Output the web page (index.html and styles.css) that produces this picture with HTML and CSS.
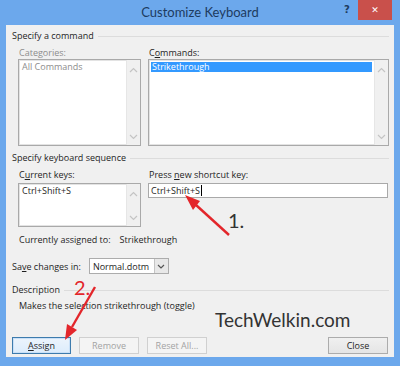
FILE: index.html
```html
<!DOCTYPE html>
<html lang="en">
<head>
    <meta charset="UTF-8">
    <meta name="viewport" content="width=device-width, initial-scale=1.0">
    <title>Customize Keyboard</title>
    <link rel="stylesheet" href="styles.css">
</head>
<body>
    <div class="window">
        <div class="titlebar">
            <span class="title">Customize Keyboard</span>
            <span class="help">?</span>
            <span class="close">&#x2715;</span>
        </div>

        <div class="client">
            <div class="group-head"><span>Specify a command</span></div>
            <div class="pair">
                <div class="col">
                    <div class="label disabled">Categories:</div>
                    <div class="listbox tall">
                        <div class="items">
                            <div class="item disabled">All Commands</div>
                        </div>
                        <div class="scroll">
                            <svg width="9" height="6" viewBox="0 0 9 6"><path d="M1 5 L4.5 1.5 L8 5" fill="none" stroke="#c4c4c4" stroke-width="1.2"/></svg>
                            <svg width="9" height="6" viewBox="0 0 9 6"><path d="M1 1 L4.5 4.5 L8 1" fill="none" stroke="#c4c4c4" stroke-width="1.2"/></svg>
                        </div>
                    </div>
                </div>
                <div class="col">
                    <div class="label">C<u>o</u>mmands:</div>
                    <div class="listbox tall">
                        <div class="items">
                            <div class="item selected">Strikethrough</div>
                        </div>
                        <div class="scroll">
                            <svg width="9" height="6" viewBox="0 0 9 6"><path d="M1 5 L4.5 1.5 L8 5" fill="none" stroke="#c4c4c4" stroke-width="1.2"/></svg>
                            <svg width="9" height="6" viewBox="0 0 9 6"><path d="M1 1 L4.5 4.5 L8 1" fill="none" stroke="#c4c4c4" stroke-width="1.2"/></svg>
                        </div>
                    </div>
                </div>
            </div>

            <div class="group-head second"><span>Specify keyboard sequence</span></div>
            <div class="pair">
                <div class="col">
                    <div class="label">C<u>u</u>rrent keys:</div>
                    <div class="listbox short">
                        <div class="items">
                            <div class="item">Ctrl+Shift+S</div>
                        </div>
                        <div class="scroll">
                            <svg width="9" height="6" viewBox="0 0 9 6"><path d="M1 5 L4.5 1.5 L8 5" fill="none" stroke="#c4c4c4" stroke-width="1.2"/></svg>
                            <svg width="9" height="6" viewBox="0 0 9 6"><path d="M1 1 L4.5 4.5 L8 1" fill="none" stroke="#c4c4c4" stroke-width="1.2"/></svg>
                        </div>
                    </div>
                </div>
                <div class="col">
                    <div class="label">Press <u>n</u>ew shortcut key:</div>
                    <div class="textbox">Ctrl+Shift+S<span class="caret"></span></div>
                </div>
            </div>

            <div class="assigned">Currently assigned to:<span class="assigned-value">Strikethrough</span></div>

            <div class="save-row">
                <span>Sa<u>v</u>e changes in:</span>
                <div class="dropdown">
                    <span class="dropdown-value">Normal.dotm</span>
                    <span class="dropdown-btn">
                        <svg width="8" height="5" viewBox="0 0 8 5"><path d="M1 1 L4 4 L7 1" fill="none" stroke="#555" stroke-width="1.2"/></svg>
                    </span>
                </div>
            </div>

            <div class="group-head third"><span>Description</span></div>
            <div class="desc">Makes the selection strikethrough (toggle)</div>

            <div class="buttons">
                <button class="btn default"><u>A</u>ssign</button>
                <button class="btn" disabled>Remove</button>
                <button class="btn" disabled>Reset All...</button>
                <span class="spacer"></span>
                <button class="btn">Close</button>
            </div>
        </div>

        <!-- annotations drawn over the screenshot -->
        <div class="watermark">TechWelkin.com</div>
        <div class="step step-1">1.</div>
        <div class="step step-2">2.</div>
        <svg class="arrows" width="400" height="366" viewBox="0 0 400 366">
            <line x1="229" y1="235" x2="196" y2="205" stroke="#e3262b" stroke-width="2.4"/>
            <polygon points="185,195 200,201 193,210" fill="#e3262b"/>
            <line x1="95" y1="287" x2="72" y2="327" stroke="#e3262b" stroke-width="2.4"/>
            <polygon points="65,340 67,324 77,330" fill="#e3262b"/>
        </svg>
    </div>
</body>
</html>
```

FILE: styles.css
```css
body {
    margin: 0;
    font-family: "Open Sans", "Noto Sans", sans-serif;
    font-size: 9px;
    color: #1e1e1e;
}
.window {
    position: relative;
    width: 400px;
    height: 366px;
    box-sizing: border-box;
    padding: 0 6px 9px 6px;
    background: #6ca8ec;
    display: flex;
    flex-direction: column;
}
.titlebar {
    position: relative;
    height: 25px;
    display: flex;
    align-items: center;
    justify-content: center;
}
.title {
    font-family: Lato, sans-serif;
    font-size: 13px;
    color: #1d3b5f;
    margin-top: -1px;
}
.help {
    position: absolute;
    left: 338px;
    top: 4px;
    font-family: "DejaVu Sans", sans-serif;
    font-weight: bold;
    font-size: 10px;
    color: #1d3b5f;
}
.close {
    position: absolute;
    left: 352px;
    top: 0;
    width: 34px;
    height: 20px;
    background: #c9504b;
    color: #fff;
    font-family: "DejaVu Sans", sans-serif;
    font-size: 9px;
    font-weight: bold;
    display: flex;
    align-items: center;
    justify-content: center;
}
.client {
    flex: 1;
    background: #f0f0f0;
    padding: 4px 5px 0 6px;
    display: flex;
    flex-direction: column;
}
.group-head {
    display: flex;
    align-items: center;
    line-height: 14px;
    height: 14px;
}
.group-head::after {
    content: "";
    flex: 1;
    height: 1px;
    background: #dcdcdc;
    margin-left: 4px;
}
.group-head.second {
    margin-top: 5px;
}
.group-head.third {
    margin-top: 9px;
}
.pair {
    display: flex;
    gap: 7px;
    padding-left: 6px;
    margin-top: 3px;
}
.col {
    display: flex;
    flex-direction: column;
}
.col:first-child {
    width: 123px;
}
.col:last-child {
    flex: 1;
}
.label {
    line-height: 13px;
    height: 13px;
    padding-left: 1px;
}
.pair + .group-head + .pair .label {
    margin-bottom: 2px;
}
.disabled {
    color: #8d8d8d;
}
.listbox {
    background: #fff;
    border: 1px solid #a9a9a9;
    box-shadow: inset 0 0 0 1px #e3e3e3;
    display: flex;
}
.listbox.tall {
    height: 87px;
    box-sizing: border-box;
}
.listbox.short {
    height: 44px;
    box-sizing: border-box;
}
.items {
    flex: 1;
    padding: 2px 2px 0 2px;
}
.item {
    line-height: 10px;
    height: 10px;
    padding: 0 1px;
}
.item.selected {
    background: #3399ff;
    color: #fff;
}
.scroll {
    width: 13px;
    background: #f0f0f0;
    border-left: 1px solid #e6e6e6;
    display: flex;
    flex-direction: column;
    justify-content: space-between;
    align-items: center;
    padding: 7px 0 5px 0;
}
.textbox {
    height: 15px;
    box-sizing: border-box;
    background: #fff;
    border: 1px solid #a9a9a9;
    margin-right: 1px;
    padding: 0 2px;
    line-height: 13px;
    display: flex;
    align-items: center;
}
.caret {
    width: 1px;
    height: 11px;
    background: #000;
    margin-left: 1px;
}
.assigned {
    margin-top: 6px;
    padding-left: 7px;
    line-height: 14px;
}
.assigned-value {
    margin-left: 9px;
}
.save-row {
    margin-top: 11px;
    height: 16px;
    display: flex;
    align-items: center;
}
.dropdown {
    margin-left: 8px;
    width: 80px;
    height: 16px;
    box-sizing: border-box;
    background: #fff;
    border: 1px solid #acacac;
    display: flex;
    align-items: center;
}
.dropdown-value {
    flex: 1;
    padding-left: 3px;
}
.dropdown-btn {
    width: 13px;
    height: 14px;
    background: #e8e8e8;
    border-left: 1px solid #c4c4c4;
    display: flex;
    align-items: center;
    justify-content: center;
}
.desc {
    margin-top: 2px;
    padding-left: 7px;
    line-height: 14px;
}
.buttons {
    margin-top: 24px;
    display: flex;
    gap: 8px;
    padding-right: 1px;
}
.spacer {
    flex: 1;
}
.btn {
    width: 60px;
    height: 17px;
    padding: 0;
    font-family: inherit;
    font-size: 9px;
    color: #1e1e1e;
    background: linear-gradient(#f0f0f0, #e5e5e5);
    border: 1px solid #acacac;
}
.btn.default {
    width: 59px;
    border-color: #3d7bad;
    box-shadow: inset 0 0 0 1px #c9e0f7;
    background: linear-gradient(#ecf4fc, #dcecfc);
}
.btn:disabled {
    color: #a3a3a3;
    background: #f4f4f4;
    border-color: #d0d0d0;
}
.watermark {
    position: absolute;
    left: 215px;
    top: 308px;
    font-family: Lato, sans-serif;
    font-size: 19px;
    color: #333;
}
.step {
    position: absolute;
    font-family: Lato, sans-serif;
    font-size: 20px;
}
.step-1 {
    left: 228px;
    top: 208px;
    color: #333;
}
.step-2 {
    left: 74px;
    top: 275px;
    color: #e3262b;
}
.arrows {
    position: absolute;
    left: 0;
    top: 0;
    pointer-events: none;
}
```
